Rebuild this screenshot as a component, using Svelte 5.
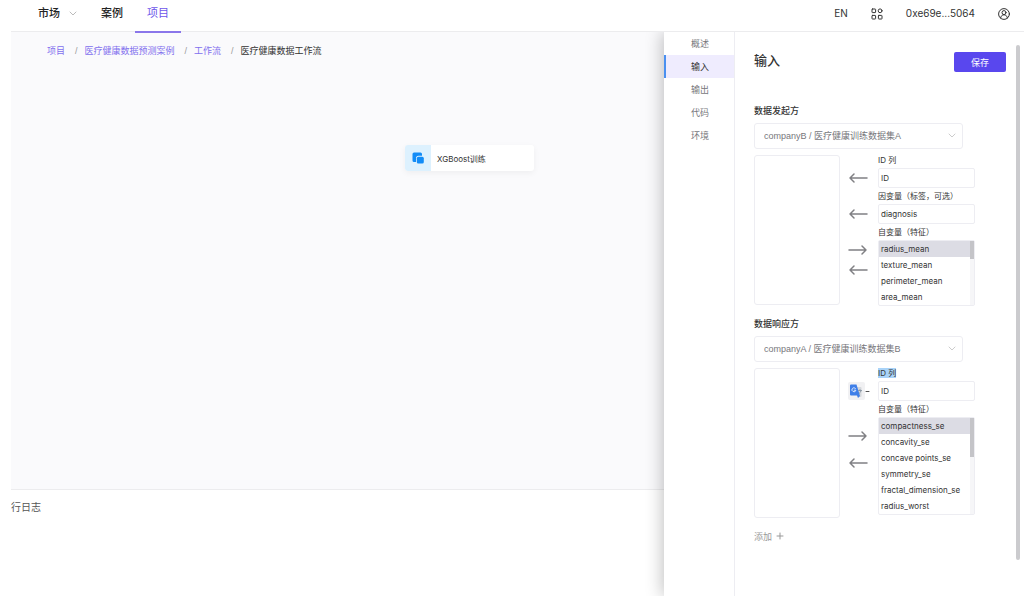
<script lang="ts">
  interface Field {
    id: string;
    label: string;
    value?: string;
    options?: string[];
    translate?: boolean;
    marked?: boolean;
  }

  interface Party {
    id: string;
    title: string;
    dataset: string;
    fields: Field[];
  }

  const crumbs = ["项目", "医疗健康数据预测案例", "工作流"];
  const sections = ["概述", "输入", "输出", "代码", "环境"];

  const parties: Party[] = [
    {
      id: "initiator",
      title: "数据发起方",
      dataset: "companyB / 医疗健康训练数据集A",
      fields: [
        { id: "id", label: "ID 列", value: "ID" },
        { id: "label", label: "因变量（标签，可选）", value: "diagnosis" },
        {
          id: "features",
          label: "自变量（特征）",
          options: ["radius_mean", "texture_mean", "perimeter_mean", "area_mean"],
        },
      ],
    },
    {
      id: "responder",
      title: "数据响应方",
      dataset: "companyA / 医疗健康训练数据集B",
      fields: [
        { id: "id", label: "ID 列", value: "ID", translate: true, marked: true },
        {
          id: "features",
          label: "自变量（特征）",
          options: [
            "compactness_se",
            "concavity_se",
            "concave points_se",
            "symmetry_se",
            "fractal_dimension_se",
            "radius_worst",
          ],
        },
      ],
    },
  ];

  let section = $state("输入");
  let selected: Record<string, string> = $state({
    initiator: "radius_mean",
    responder: "compactness_se",
  });
</script>

{#snippet arrow(dir: "left" | "right")}
  <button type="button" class="arrow" aria-label={dir === "left" ? "移出" : "移入"}>
    <svg viewBox="0 0 20 12" width="20" height="12">
      {#if dir === "left"}
        <path d="M19 6H2M6 2L2 6l4 4" />
      {:else}
        <path d="M1 6h17M14 2l4 4-4 4" />
      {/if}
    </svg>
  </button>
{/snippet}

<div class="app">
  <header>
    <nav class="tabs">
      <a href="#market">
        市场
        <svg viewBox="0 0 8 6" width="8" height="6"><path d="M1 1l3 3 3-3" /></svg>
      </a>
      <a href="#cases">案例</a>
      <a href="#projects" class="active">项目</a>
    </nav>
    <div class="account">
      <button type="button">EN</button>
      <button type="button" aria-label="应用">
        <svg viewBox="0 0 12 12" width="12" height="12">
          <rect x="1" y="1" width="3.6" height="3.6" rx="0.5" />
          <circle cx="9.1" cy="2.8" r="1.9" />
          <rect x="1" y="7.4" width="3.6" height="3.6" rx="0.5" />
          <rect x="7.4" y="7.4" width="3.6" height="3.6" rx="0.5" />
        </svg>
      </button>
      <span>0xe69e...5064</span>
      <button type="button" aria-label="账户">
        <svg viewBox="0 0 12 12" width="12" height="12">
          <circle cx="6" cy="6" r="5.4" />
          <circle cx="6" cy="4.6" r="2" />
          <path d="M2.6 10c.3-2 1.6-3.2 3.4-3.2S9.1 8 9.4 10" />
        </svg>
      </button>
    </div>
  </header>

  <div class="workspace">
    <main>
      <section class="canvas">
        <nav class="crumbs">
          {#each crumbs as crumb (crumb)}
            <a href="#{crumb}">{crumb}</a>
            <span class="sep">/</span>
          {/each}
          <span>医疗健康数据工作流</span>
        </nav>
        <div class="node">
          <span class="node-icon">
            <svg viewBox="0 0 12 12" width="12" height="12">
              <path d="M2 .5h6.5a1.500 1.500 0 0 1 1.500 1.500v1.800H6.500A2.500 2.500 0 0 0 4 6.300V10H2A1.500 1.500 0 0 1 .5 8.500V2A1.500 1.500 0 0 1 2 .5z" />
              <rect x="4.800" y="4.700" width="7" height="6.800" rx="1.500" />
            </svg>
          </span>
          <span class="node-name">XGBoost训练</span>
        </div>
      </section>
      <section class="log">行日志</section>
    </main>

    <aside>
      <ul class="sections">
        {#each sections as name (name)}
          <li>
            <button type="button" class:active={section === name} onclick={() => (section = name)}>
              {name}
            </button>
          </li>
        {/each}
      </ul>

      <form class="panel" onsubmit={(e) => e.preventDefault()}>
        <div class="panel-head">
          <h1>{section}</h1>
          <button type="submit" class="save">保存</button>
        </div>

        {#each parties as party (party.id)}
          <div class="party">
            <label class="party-title" for="{party.id}-dataset">{party.title}</label>
            <div class="dataset">
              <select id="{party.id}-dataset">
                <option>{party.dataset}</option>
              </select>
              <svg viewBox="0 0 8 6" width="8" height="6"><path d="M1 1l3 3 3-3" /></svg>
            </div>
            <div class="mapping">
              <div class="pool"></div>
              <div class="fields">
                {#each party.fields as field (field.id)}
                  <label class="field-label" for="{party.id}-{field.id}">
                    <span class:marked={field.marked}>{field.label}</span>
                  </label>
                  {#if field.options}
                    <div class="arrows" class:spread={field.options.length > 4}>
                      {@render arrow("right")}
                      {@render arrow("left")}
                    </div>
                    <div class="list" id="{party.id}-{field.id}" role="listbox" aria-label={field.label}>
                      {#each field.options as option (option)}
                        <button
                          type="button"
                          role="option"
                          aria-selected={selected[party.id] === option}
                          onclick={() => (selected[party.id] = option)}>{option}</button
                        >
                      {/each}
                      <span class="track"><span class="thumb"></span></span>
                    </div>
                  {:else}
                    {#if field.translate}
                      <button type="button" class="translate" aria-label="翻译">
                        <svg viewBox="0 0 22 18" width="22" height="18">
                          <rect class="tile" width="17" height="18" rx="2" />
                          <path class="sheet" d="M8 5h4.500a1 1 0 0 1 1 1v8a1 1 0 0 1-1 1H10z" />
                          <path class="page" d="M3 2.500h5.500L12 14l-2 2-1-2.500H3a1 1 0 0 1-1-1v-9a1 1 0 0 1 1-1z" />
                          <path class="ring" d="M7.600 6.600a2 2 0 1 0 .3 1.600H6.200" />
                          <path class="mark" d="M10.500 8.500h3M12 7.500v1M13.200 8.500q-.5 2-2 3" />
                          <path class="caret" d="M18 9.500h3" />
                        </svg>
                      </button>
                    {:else}
                      {@render arrow("left")}
                    {/if}
                    <input id="{party.id}-{field.id}" type="text" value={field.value} />
                  {/if}
                {/each}
              </div>
            </div>
          </div>
        {/each}

        <button type="button" class="add">
          添加
          <svg viewBox="0 0 8 8" width="8" height="8"><path d="M4 1v6M1 4h6" /></svg>
        </button>
      </form>
      <span class="scrollbar"></span>
    </aside>
  </div>
</div>

<style>
  :global(body) {
    background: #fff;
  }
  .app {
    --purple: #5947ee;
    --border: #ededf2;
    --muted: #77777c;
    box-sizing: border-box;
    min-height: 100vh;
    padding: 0 0 7px 11px;
    display: flex;
    flex-direction: column;
    font-family: "Liberation Sans", "Noto Sans CJK SC", sans-serif;
    font-size: 9px;
    color: #333;
  }
  button,
  input,
  select {
    font: inherit;
    color: inherit;
    margin: 0;
    padding: 0;
    border: none;
    background: none;
    box-sizing: border-box;
  }
  button {
    cursor: pointer;
  }
  a {
    color: inherit;
    text-decoration: none;
  }
  svg {
    display: block;
    fill: none;
    stroke: currentColor;
    stroke-linecap: round;
    stroke-linejoin: round;
  }
  header {
    position: relative;
    z-index: 1;
    display: flex;
    justify-content: space-between;
    height: 32px;
    box-sizing: border-box;
    border-bottom: 1px solid #ececee;
    font-size: 11px;
    line-height: 27px;
  }
  .tabs {
    display: flex;
    padding-left: 15px;
    color: #222;
    font-weight: 500;
  }
  .tabs a {
    display: flex;
    align-items: center;
    gap: 9px;
    height: 27px;
    padding: 0 12px;
  }
  .tabs svg {
    color: #bbb;
  }
  .tabs .active {
    height: 31px;
    align-items: flex-start;
    color: #6e56ea;
    border-bottom: 2px solid #8a76ea;
    font-weight: 400;
  }
  .account {
    display: flex;
    align-items: center;
    height: 27px;
    gap: 23px;
    padding-right: 14px;
    font-family: Inter, "Noto Sans CJK SC", sans-serif;
    font-size: 10px;
  }
  .workspace {
    flex: 1;
    display: flex;
    overflow: hidden;
  }
  main {
    flex: 1;
    display: flex;
    flex-direction: column;
  }
  .canvas {
    flex: 1;
    position: relative;
    background: #fafafc;
    border-bottom: 1px solid #ececee;
  }
  .crumbs {
    display: flex;
    padding: 12px 36px;
    line-height: 14px;
  }
  .crumbs a {
    color: #8270ee;
  }
  .sep {
    margin: 0 7px 0 10px;
    color: #999;
  }
  .node {
    position: absolute;
    left: 394px;
    top: 113px;
    display: flex;
    align-items: center;
    width: 129px;
    height: 26px;
    background: #fff;
    border-radius: 3px;
    box-shadow: 0 2px 6px rgba(0, 0, 0, 0.05);
    overflow: hidden;
  }
  .node-icon {
    display: grid;
    place-items: center;
    width: 26px;
    height: 26px;
    background: #ddf1fe;
  }
  .node-icon svg {
    fill: #128cf7;
    stroke: none;
  }
  .node-name {
    padding-left: 6px;
    font-family: Inter, "Noto Sans CJK SC", sans-serif;
    font-size: 8px;
  }
  .log {
    height: 106px;
    line-height: 35px;
    font-size: 10px;
    color: #555;
  }
  aside {
    position: relative;
    display: flex;
    width: 360px;
    background: #fff;
    box-shadow: -2px 0 16px rgba(0, 0, 0, 0.24);
  }
  .sections {
    width: 70px;
    margin: 0;
    padding: 0;
    list-style: none;
    border-right: 1px solid var(--border);
  }
  .sections li {
    display: flex;
  }
  .sections button {
    flex: 1;
    height: 23px;
    color: var(--muted);
    border-left: 2px solid transparent;
  }
  .sections .active {
    color: #333;
    background: #efecfe;
    border-left-color: #4a90f0;
  }
  .panel {
    flex: 1;
    padding: 20px 18px 0 19px;
  }
  .panel-head {
    display: flex;
    justify-content: space-between;
    height: 20px;
    margin-bottom: 31px;
  }
  h1 {
    margin: 0;
    font-size: 13px;
    line-height: 18px;
    font-weight: 500;
  }
  .save {
    width: 52px;
    height: 20px;
    color: #fff;
    background: var(--purple);
    border-radius: 2px;
  }
  .party {
    margin-bottom: 10px;
  }
  .party-title {
    display: block;
    height: 20px;
    line-height: 16px;
    font-weight: 500;
  }
  .dataset {
    display: flex;
    align-items: center;
    width: 209px;
    height: 26px;
    box-sizing: border-box;
    border: 1px solid var(--border);
    border-radius: 3px;
  }
  .dataset select {
    flex: 1;
    height: 24px;
    padding-left: 9px;
    appearance: none;
    color: var(--muted);
  }
  .dataset svg {
    margin-right: 6px;
    color: #ccc;
    pointer-events: none;
  }
  .mapping {
    display: flex;
    gap: 8px;
  }
  .pool {
    width: 86px;
    height: 150px;
    margin-top: 6px;
    box-sizing: border-box;
    border: 1px solid var(--border);
    border-radius: 3px;
  }
  .fields {
    display: grid;
    grid-template-columns: 20px 97px;
    column-gap: 10px;
    align-content: start;
    padding-top: 3px;
    font-family: Inter, "Noto Sans CJK SC", sans-serif;
    font-size: 8px;
  }
  .field-label {
    grid-column: 2;
    height: 16px;
    line-height: 16px;
    white-space: nowrap;
  }
  .marked {
    background: #a9d3f8;
  }
  .fields input {
    width: 97px;
    height: 20px;
    padding: 0 2px;
    border: 1px solid var(--border);
    border-radius: 2px;
  }
  .arrow {
    display: grid;
    place-items: center;
    height: 20px;
    color: #808084;
    stroke-width: 1.5;
  }
  .arrows {
    display: flex;
    flex-direction: column;
  }
  .arrows.spread {
    gap: 7px;
    padding-top: 9px;
  }
  .translate svg {
    stroke: none;
  }
  .translate .tile {
    fill: #f1f1f3;
  }
  .translate .sheet {
    fill: #d5d8dc;
  }
  .translate .page {
    fill: #3f7fe8;
  }
  .translate .ring {
    stroke: #dce8fc;
  }
  .translate .mark {
    stroke: #7d8b99;
    stroke-width: 0.7;
  }
  .translate .caret {
    stroke: #555;
  }
  .list {
    position: relative;
    display: flex;
    flex-direction: column;
    border: 1px solid var(--border);
    border-radius: 2px;
  }
  .list button {
    height: 16px;
    padding: 0 2px;
    text-align: left;
  }
  .list [aria-selected="true"] {
    background: #dcdce4;
  }
  .track {
    position: absolute;
    top: 0;
    right: 0;
    width: 4px;
    height: 100%;
    background: #f6f6f8;
  }
  .thumb {
    display: block;
    height: 18px;
    background: #c4c4c8;
  }
  .spread + .list .thumb {
    height: 39px;
  }
  .add {
    display: flex;
    align-items: center;
    gap: 4px;
    height: 16px;
    color: #999;
  }
  .scrollbar {
    position: absolute;
    top: 13px;
    right: 4px;
    bottom: 36px;
    width: 4px;
    background: #cbcbce;
    border-radius: 2px;
  }
</style>
